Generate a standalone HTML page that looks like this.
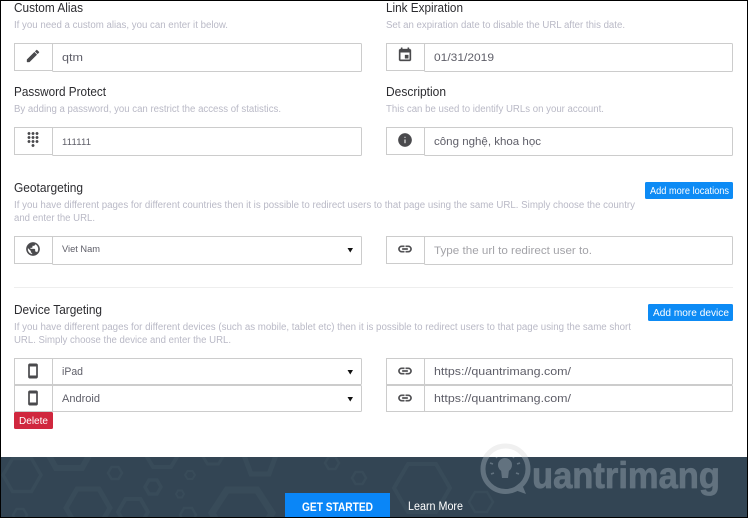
<!DOCTYPE html>
<html><head><meta charset="utf-8"><style>
html,body{margin:0;padding:0;background:#fff}
#p{position:relative;width:748px;height:518px;overflow:hidden;background:#fff}
svg{position:absolute;left:0;top:0}
text{font-family:"Liberation Sans",sans-serif;white-space:pre}
.t{font-size:12.5px;fill:#2c2c30}
.d{font-size:10px;fill:#b9b9c6}
.v{font-size:11px;fill:#5e5e68}
.i{fill:#4a4a4d;stroke:#4a4a4d;stroke-width:.5}
</style></head><body><div id="p">
<svg width="748" height="518" viewBox="0 0 748 518">
<defs>
<path id="pen" d="M3 17.25V21h3.75L17.81 9.94l-3.75-3.75L3 17.25zM20.71 7.04a1 1 0 000-1.41l-2.34-2.34a1 1 0 00-1.41 0l-1.83 1.83 3.75 3.75 1.83-1.83z"/>
<path id="cal" d="M17 12h-5v5h5v-5zM16 1v2H8V1H6v2H5c-1.11 0-1.99.9-1.99 2L3 19c0 1.1.89 2 2 2h14c1.1 0 2-.9 2-2V5c0-1.1-.9-2-2-2h-1V1h-2zm3 18H5V8h14v11z"/>
<path id="dial" d="M12 19c-1.1 0-2 .9-2 2s.9 2 2 2 2-.9 2-2-.9-2-2-2zM6 1c-1.1 0-2 .9-2 2s.9 2 2 2 2-.9 2-2-.9-2-2-2zm0 6c-1.1 0-2 .9-2 2s.9 2 2 2 2-.9 2-2-.9-2-2-2zm0 6c-1.1 0-2 .9-2 2s.9 2 2 2 2-.9 2-2-.9-2-2-2zm12-8c1.1 0 2-.9 2-2s-.9-2-2-2-2 .9-2 2 .9 2 2 2zm-6 8c-1.1 0-2 .9-2 2s.9 2 2 2 2-.9 2-2-.9-2-2-2zm6 0c-1.1 0-2 .9-2 2s.9 2 2 2 2-.9 2-2-.9-2-2-2zm0-6c-1.1 0-2 .9-2 2s.9 2 2 2 2-.9 2-2-.9-2-2-2zm-6 0c-1.1 0-2 .9-2 2s.9 2 2 2 2-.9 2-2-.9-2-2-2zm0-6c-1.1 0-2 .9-2 2s.9 2 2 2 2-.9 2-2-.9-2-2-2z"/>
<path id="inf" d="M12 2C6.48 2 2 6.48 2 12s4.48 10 10 10 10-4.48 10-10S17.52 2 12 2zm1 15h-2v-6h2v6zm0-8h-2V7h2v2z"/>
<path id="pub" d="M12 2C6.48 2 2 6.48 2 12s4.48 10 10 10 10-4.48 10-10S17.52 2 12 2zm-1 17.93c-3.95-.49-7-3.85-7-7.93 0-.62.08-1.21.21-1.79L9 15v1c0 1.1.9 2 2 2v1.93zm6.9-2.54c-.26-.81-1-1.39-1.9-1.39h-1v-3c0-.55-.45-1-1-1H8v-2h2c.55 0 1-.45 1-1V7h2c1.1 0 2-.9 2-2v-.41c2.93 1.19 5 4.06 5 7.41 0 2.08-.8 3.97-2.1 5.39z"/>
<path id="lnk" d="M3.9 12c0-1.71 1.39-3.1 3.1-3.1h4V7H7c-2.76 0-5 2.24-5 5s2.24 5 5 5h4v-1.9H7c-1.71 0-3.1-1.39-3.1-3.1zM8 13h8v-2H8v2zm9-6h-4v1.9h4c1.71 0 3.1 1.39 3.1 3.1s-1.39 3.1-3.1 3.1h-4V17h4c2.76 0 5-2.24 5-5s-2.24-5-5-5z"/>
<path id="ph" d="M17 1.01L7 1c-1.1 0-2 .9-2 2v18c0 1.1.9 2 2 2h10c1.1 0 2-.9 2-2V3c0-1.1-.9-1.99-2-1.99zM17 19H7V5h10v14z"/>
<g id="box"><rect x=".5" y=".5" width="38" height="27" fill="#fff" stroke="#cccccc"/><rect x="38.5" y=".5" width="309" height="28" rx="1" fill="#fff" stroke="#cccccc"/></g>
<g id="boxr"><rect x=".5" y=".5" width="38" height="27" fill="#fff" stroke="#cccccc"/><rect x="38.5" y=".5" width="308" height="28" rx="1" fill="#fff" stroke="#cccccc"/></g>
<g id="sbox"><rect x=".5" y=".5" width="38" height="26" fill="#fff" stroke="#cccccc"/><rect x="38.5" y=".5" width="309" height="26" rx="1" fill="#fff" stroke="#cccccc"/></g>
<g id="sboxr"><rect x=".5" y=".5" width="38" height="26" fill="#fff" stroke="#cccccc"/><rect x="38.5" y=".5" width="308" height="26" rx="1" fill="#fff" stroke="#cccccc"/></g>
<clipPath id="fc"><rect x="1" y="457" width="746" height="60"/></clipPath>
<clipPath id="wc"><rect x="470" y="440" width="70" height="17"/></clipPath>
</defs>

<!-- inputs -->
<use href="#box" x="14" y="43"/><use href="#boxr" x="386" y="43"/>
<use href="#box" x="14" y="127"/><use href="#boxr" x="386" y="127"/>
<use href="#box" x="14" y="236"/><use href="#boxr" x="386" y="236"/>
<use href="#sbox" x="14" y="358"/><use href="#sboxr" x="386" y="358"/>
<use href="#sbox" x="14" y="385"/><use href="#sboxr" x="386" y="385"/>
<rect x="14" y="287" width="719" height="1" fill="#eeeeee"/>

<!-- icons -->
<g class="i">
<use href="#pen" transform="translate(25 48) scale(.667)"/>
<use href="#cal" transform="translate(397 47) scale(.667)"/>
<use href="#dial" transform="translate(25 131.500) scale(.667)"/>
<use href="#inf" transform="translate(397 132) scale(.667)"/>
<use href="#pub" transform="translate(25 241) scale(.667)"/>
<use href="#lnk" transform="translate(397 241) scale(.667)"/>
<use href="#ph" transform="translate(25 363) scale(.667)"/>
<use href="#ph" transform="translate(25 390) scale(.667)"/>
<use href="#lnk" transform="translate(397 363) scale(.667)"/>
<use href="#lnk" transform="translate(397 390) scale(.667)"/>
</g>
<!-- select arrows -->
<g fill="#111"><path d="M347.500 248h5.500l-2.750 4.500zM347.500 370h5.500l-2.750 4.500zM347.500 397h5.500l-2.750 4.500z"/></g>

<!-- headings -->
<text class="t" x="14" y="12" textLength="69" lengthAdjust="spacingAndGlyphs">Custom Alias</text>
<text class="t" x="386" y="12" textLength="77" lengthAdjust="spacingAndGlyphs">Link Expiration</text>
<text class="t" x="14" y="96" textLength="92" lengthAdjust="spacingAndGlyphs">Password Protect</text>
<text class="t" x="386" y="96" textLength="60" lengthAdjust="spacingAndGlyphs">Description</text>
<text class="t" x="14" y="192" textLength="69" lengthAdjust="spacingAndGlyphs">Geotargeting</text>
<text class="t" x="14" y="314" textLength="88" lengthAdjust="spacingAndGlyphs">Device Targeting</text>

<!-- descriptions -->
<text class="d" x="14" y="28" textLength="214" lengthAdjust="spacingAndGlyphs">If you need a custom alias, you can enter it below.</text>
<text class="d" x="386" y="28" textLength="239" lengthAdjust="spacingAndGlyphs">Set an expiration date to disable the URL after this date.</text>
<text class="d" x="14" y="112" textLength="267" lengthAdjust="spacingAndGlyphs">By adding a password, you can restrict the access of statistics.</text>
<text class="d" x="386" y="112" textLength="218" lengthAdjust="spacingAndGlyphs">This can be used to identify URLs on your account.</text>
<text class="d" x="14" y="208" textLength="621" lengthAdjust="spacingAndGlyphs">If you have different pages for different countries then it is possible to redirect users to that page using the same URL. Simply choose the country</text>
<text class="d" x="14" y="221" textLength="81" lengthAdjust="spacingAndGlyphs">and enter the URL.</text>
<text class="d" x="14" y="330" textLength="617" lengthAdjust="spacingAndGlyphs">If you have different pages for different devices (such as mobile, tablet etc) then it is possible to redirect users to that page using the same short</text>
<text class="d" x="14" y="343" textLength="217" lengthAdjust="spacingAndGlyphs">URL. Simply choose the device and enter the URL.</text>

<!-- values -->
<text class="v" x="62" y="61" textLength="21" lengthAdjust="spacingAndGlyphs">qtm</text>
<text class="v" style="font-size:9.500px" x="62" y="145" textLength="29" lengthAdjust="spacing">111111</text>
<text class="v" x="434" y="61" textLength="60" lengthAdjust="spacingAndGlyphs">01/31/2019</text>
<text class="v" x="434" y="145" textLength="107" lengthAdjust="spacingAndGlyphs">công nghệ, khoa học</text>
<text class="v" style="font-size:9.500px" x="62" y="252" textLength="38" lengthAdjust="spacingAndGlyphs">Viet Nam</text>
<text class="v" style="fill:#a3a3a8" x="434" y="254" textLength="158" lengthAdjust="spacingAndGlyphs">Type the url to redirect user to.</text>
<text class="v" x="62" y="375" textLength="21" lengthAdjust="spacingAndGlyphs">iPad</text>
<text class="v" x="62" y="402" textLength="38" lengthAdjust="spacingAndGlyphs">Android</text>
<text class="v" x="434" y="375" textLength="137" lengthAdjust="spacingAndGlyphs">https://quantrimang.com/</text>
<text class="v" x="434" y="402" textLength="137" lengthAdjust="spacingAndGlyphs">https://quantrimang.com/</text>

<!-- blue / red buttons -->
<rect x="645" y="182" width="88" height="17" rx="1.500" fill="#0d8bf5"/>
<text x="650" y="194" font-size="10.500" fill="#fff" textLength="79" lengthAdjust="spacingAndGlyphs">Add more locations</text>
<rect x="648" y="304" width="85" height="17" rx="1.500" fill="#0d8bf5"/>
<text x="653" y="316" font-size="10.500" fill="#fff" textLength="76" lengthAdjust="spacingAndGlyphs">Add more device</text>
<rect x="14" y="412" width="39" height="17" rx="1.500" fill="#d0273e"/>
<text x="19" y="424" font-size="10.500" fill="#fff" textLength="29" lengthAdjust="spacingAndGlyphs">Delete</text>

<!-- footer -->
<rect x="1" y="457" width="746" height="60" fill="#334554"/>
<g clip-path="url(#fc)" fill="none" stroke="#384b59" stroke-width="3.500">
<polygon points="3,475 12.500,458.500 31.500,458.500 41,475 31.500,491.500 12.500,491.500"/>
<polygon points="43,445 56,422 82,422 95,445 82,468 56,468" stroke-width="6"/>
<polygon points="108,473 111.500,467 118.500,467 122,473 118.500,479 111.500,479" stroke-width="2.500"/>
<polygon points="145,487 149,480 157,480 161,487 157,494 149,494"/>
<polygon points="185,475 187.500,471 192.500,471 195,475 192.500,479 187.500,479" stroke-width="2"/>
<polygon points="176,494 178,490.500 182,490.500 184,494 182,497.500 178,497.500" stroke-width="2"/>
<polygon points="66,508 77,489 99,489 110,508 99,527 77,527" stroke-width="5"/>
<polygon points="118,512 125.500,499 140.500,499 148,512 140.500,525 125.500,525" stroke-width="4"/>
<polygon points="13,515 16.500,509 23.500,509 27,515 23.500,521 16.500,521" stroke-width="2.500"/>
<polygon points="180,515 184,508 192,508 196,515 192,522 184,522" stroke-width="2.500"/>
<polygon points="212,513 227,490 257,490 272,513 257,540 227,540" stroke-width="7"/>
<polygon points="144,452 153,436 171,436 180,452 171,467 153,467" stroke-width="4"/>
<polygon points="202,455 207.500,446 218.500,446 224,455 218.500,464 207.500,464" stroke-width="3"/>
<polygon points="242,450 251,434 269,434 278,450 269,474 251,474" stroke-width="5"/>
<polygon points="325,463 328.500,457 335.500,457 339,463 335.500,469 328.500,469" stroke-width="2.500"/>
<polygon points="352,478 355.500,472 362.500,472 366,478 362.500,484 355.500,484" stroke-width="2.500"/>
<polygon points="394,488 408,464 436,464 450,488 436,512 408,512" stroke-width="4"/>
<polygon points="469,502 475,492 487,492 493,502 487,512 475,512" stroke-width="2.500"/>
</g>
<rect x="285" y="493" width="105" height="24" fill="#0a86f7"/>
<text x="302" y="511" font-size="11.500" font-weight="700" fill="#fff" textLength="71" lengthAdjust="spacingAndGlyphs">GET STARTED</text>
<text x="408" y="510" font-size="11.500" fill="#fff" textLength="55" lengthAdjust="spacingAndGlyphs">Learn More</text>

<!-- watermark -->
<circle clip-path="url(#wc)" cx="505.500" cy="469" r="23" fill="none" stroke="#f0f0f0" stroke-width="5"/>
<g clip-path="url(#fc)">
<circle cx="505.500" cy="469" r="22.500" fill="none" stroke="#62727f" stroke-width="5"/>
<path d="M512 489l14 5-5-12z" fill="#62727f"/>
<circle cx="505" cy="465" r="7" fill="#62727f"/>
<path d="M501 470h8l-1 8h-6z" fill="#62727f"/>
<g stroke="#62727f" stroke-width="1.600"><path d="M505 452v3M495 455l2 3M515 455l-2 3M490 463l3 1M520 463l-3 1M491 474l3-1M519 474l-3-1"/></g>
<text style="font-size:37px;font-weight:700;fill:#62727f;stroke:#62727f;stroke-width:.8;stroke-linejoin:round" x="532" y="488" textLength="188" lengthAdjust="spacingAndGlyphs">uantrimang</text>
</g>

<!-- frame -->
<rect x="0" y="0" width="748" height="1" fill="#000"/>
<rect x="0" y="0" width="1" height="518" fill="#000"/>
<rect x="747" y="0" width="1" height="518" fill="#000"/>
<rect x="0" y="517" width="748" height="1" fill="#000"/>
</svg>
</div></body></html>
